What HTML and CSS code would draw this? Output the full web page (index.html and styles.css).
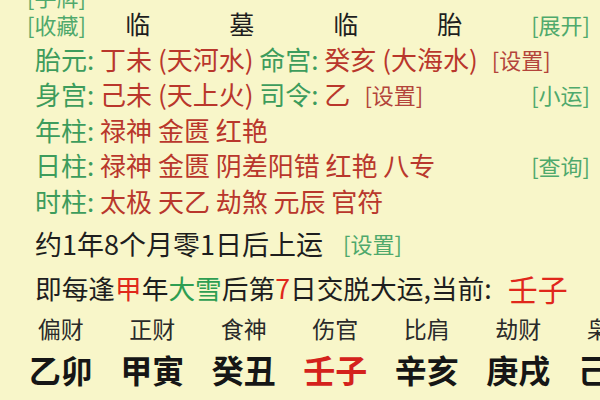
FILE: index.html
```html
<!DOCTYPE html>
<html lang="zh-CN">
<head>
<meta charset="utf-8">
<link rel="stylesheet" href="styles.css">
</head>
<body>
<div class="page">
  <div class="row r0"><span class="link">[手牌]</span></div>
  <div class="row r1">
    <span class="link">[收藏]</span>
    <span class="cell">临</span>
    <span class="cell">墓</span>
    <span class="cell">临</span>
    <span class="cell">胎</span>
    <span class="link right">[展开]</span>
  </div>
  <div class="row info"><span class="lab">胎元:</span>&nbsp;<span class="red">丁未 (天河水)</span>&nbsp;<span class="lab">命宫:</span>&nbsp;<span class="red">癸亥 (大海水)</span><span class="set">[设置]</span></div>
  <div class="row info"><span class="lab">身宫:</span>&nbsp;<span class="red">己未 (天上火)</span>&nbsp;<span class="lab">司令:</span>&nbsp;<span class="red">乙</span><span class="set">[设置]</span><span class="link right">[小运]</span></div>
  <div class="row info"><span class="lab">年柱:</span>&nbsp;<span class="red">禄神 金匮 红艳</span></div>
  <div class="row info"><span class="lab">日柱:</span>&nbsp;<span class="red">禄神 金匮 阴差阳错 红艳 八专</span><span class="link right">[查询]</span></div>
  <div class="row info"><span class="lab">时柱:</span>&nbsp;<span class="red">太极 天乙 劫煞 元辰 官符</span></div>
  <div class="row r7"><span class="dark">约1年8个月零1日后上运</span><span class="link gap">[设置]</span></div>
  <div class="row r8"><span class="dark">即每逢<span class="bright">甲</span>年<span class="grn">大雪</span>后第<span class="bright">7</span>日交脱大运,当前: </span><span class="bright big">壬子</span></div>
  <div class="grid gods">
    <span>偏财</span><span>正财</span><span>食神</span><span>伤官</span><span>比肩</span><span>劫财</span><span>枭神</span>
  </div>
  <div class="grid pillars">
    <span>乙卯</span><span>甲寅</span><span>癸丑</span><span class="hot">壬子</span><span>辛亥</span><span>庚戌</span><span>己酉</span>
  </div>
</div>
</body>
</html>
```
FILE: styles.css
```css
html, body {
  margin: 0;
  padding: 0;
  width: 600px;
  height: 400px;
  overflow: hidden;
  background: #f8f6c9;
}
.page {
  font-family: "Noto Sans CJK SC", "Noto Sans", sans-serif;
  color: #1e1e1e;
  width: 600px;
}
.row {
  display: flex;
  align-items: center;
  white-space: nowrap;
  padding-right: 10px;
}
.r0 {
  margin-top: -15px;
  height: 21px;
  padding-left: 27px;
}
.r1 {
  height: 35.4px;
  padding-left: 27px;
}
.link {
  font-size: 22px;
  color: #4fa96c;
  line-height: 1;
}
.right {
  margin-left: auto;
}
.cell {
  width: 104px;
  text-align: center;
  font-size: 25px;
  line-height: 1;
}
.r1 .cell:first-of-type {
  margin-left: 2px;
}
.info {
  height: 35.4px;
  padding-left: 35px;
  font-size: 26px;
  line-height: 1;
}
.lab {
  color: #3d9c5c;
}
.red {
  color: #b9372c;
}
.set {
  font-size: 22px;
  color: #b3443a;
  margin-left: 14px;
}
.r7 {
  height: 50.2px;
  padding-left: 35px;
  font-size: 27px;
  line-height: 1;
}
.gap {
  margin-left: 20px;
}
.r8 {
  height: 39px;
  padding-left: 35px;
  font-size: 26.7px;
  line-height: 1;
}
.bright {
  color: #e0271b;
}
.grn {
  color: #2e9e52;
}
.big {
  font-size: 30px;
  margin-left: 16px;
}
.grid {
  display: grid;
  grid-template-columns: repeat(7, 91.5px);
  margin-left: 15px;
  text-align: center;
  white-space: nowrap;
}
.gods {
  height: 41px;
  align-items: center;
  font-size: 23px;
  line-height: 1;
  color: #2a2a2a;
}
.pillars {
  height: 40px;
  align-items: center;
  font-size: 32px;
  font-weight: 700;
  line-height: 1;
  color: #161616;
}
.hot {
  color: #d4221c;
}
```
